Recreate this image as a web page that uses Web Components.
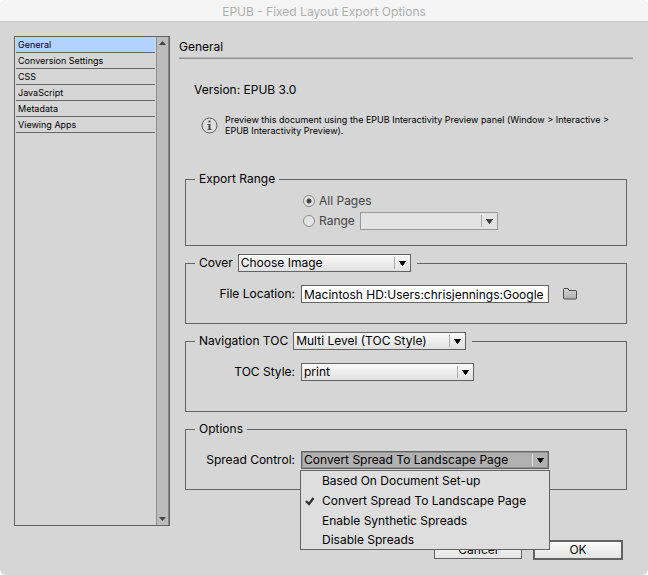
<!DOCTYPE html>
<html lang="en">
<head>
<meta charset="utf-8">
<meta name="viewport" content="width=device-width, initial-scale=1">
<title>EPUB - Fixed Layout Export Options</title>
<style>
  html { background: #fff; }
  body {
    margin: 0;
    font: 12px/18px Inter, "Liberation Sans", sans-serif;
    color: #000;
    --line: #636363;
    --panel: #d6d6d6;
  }
</style>
</head>
<body>
<dialog-window heading="EPUB - Fixed Layout Export Options">
  <section-list slot="sidebar" items="General|Conversion Settings|CSS|JavaScript|Metadata|Viewing Apps" current="General"></section-list>
  <settings-page heading="General">
    <version-info version="Version: EPUB 3.0">Preview this document using the EPUB Interactivity Preview panel (Window &gt; Interactive &gt; EPUB Interactivity Preview).</version-info>
    <group-box>
      <span slot="legend">Export Range</span>
      <range-choice></range-choice>
    </group-box>
    <group-box>
      <drop-down slot="legend" label="Cover" options="Choose Image"></drop-down>
      <file-field label="File Location:" value="Macintosh HD:Users:chrisjennings:Google Drive"></file-field>
    </group-box>
    <group-box class="tall">
      <drop-down slot="legend" label="Navigation TOC" options="Multi Level (TOC Style)"></drop-down>
      <drop-down class="row" label="TOC Style:" options="print"></drop-down>
    </group-box>
    <group-box>
      <span slot="legend">Options</span>
      <drop-down class="row wide" open label="Spread Control:" value="Convert Spread To Landscape Page"
        options="Based On Document Set-up|Convert Spread To Landscape Page|Enable Synthetic Spreads|Disable Spreads"></drop-down>
    </group-box>
  </settings-page>
  <push-button slot="actions">Cancel</push-button>
  <push-button slot="actions" primary>OK</push-button>
</dialog-window>

<script>
const define = (name, render, setup) => customElements.define(name, class extends HTMLElement {
  connectedCallback() {
    if (this.shadowRoot) return;
    const root = this.attachShadow({ mode: 'open' });
    root.innerHTML = '<style>*{box-sizing:border-box}</style>' + render(this);
    if (setup) setup(this, root);
  }
});

define('dialog-window', el => `
  <style>
    :host { display: flex; flex-direction: column; min-height: 100vh; background: var(--panel); border-radius: 6px; overflow: hidden; }
    header { background: #f5f5f5; border-bottom: 1px solid #cbcbcb; }
    h1 { margin: 0; padding: 3px 0 0; font-size: 12px; line-height: 18px; font-weight: 400; text-align: center; color: #b0b0b0; }
    .body { flex: 1; display: grid; grid-template: 1fr auto / 156px 1fr; gap: 14px 9px; padding: 14px 15px 15px 14px; }
    footer { grid-column: 1 / -1; display: flex; justify-content: flex-end; gap: 11px; padding-right: 10px; }
  </style>
  <header><h1>${el.getAttribute('heading')}</h1></header>
  <div class="body">
    <slot name="sidebar"></slot>
    <slot></slot>
    <footer><slot name="actions"></slot></footer>
  </div>`);

define('section-list', el => `
  <style>
    :host { display: flex; border: 1px solid var(--line); }
    nav { flex: 1; padding: 0 1px; min-width: 0; }
    button { display: block; width: 100%; height: 16px; padding: 0 2px; border: 0; border-bottom: 1px solid #686868; background: none; color: inherit; font: inherit; font-size: 9px; line-height: 15px; text-align: left; }
    button[aria-current] { background: #b3d2fd; }
    .bar { width: 13px; display: flex; flex-direction: column; justify-content: space-between; align-items: center; padding: 4px 0; background: #bcbcbc; border-left: 1px solid #8e8e8e; border-right: 1px solid #858585; }
    svg { display: block; fill: #444; }
  </style>
  <nav aria-label="Sections">${el.getAttribute('items').split('|').map(t =>
    `<button type="button"${t === el.getAttribute('current') ? ' aria-current="page"' : ''}>${t}</button>`).join('')}</nav>
  <div class="bar" aria-hidden="true">
    <svg width="7" height="4"><path d="M0 4 3.5 0 7 4Z"/></svg>
    <svg width="7" height="4"><path d="M0 0 3.5 4 7 0Z"/></svg>
  </div>`);

define('settings-page', el => `
  <style>
    :host { display: block; min-width: 0; }
    h2 { margin: 0; padding-top: 1px; font-size: 12px; line-height: 20px; font-weight: 400; }
    hr { margin: 0; height: 2px; border: 0; border-top: 1px solid #b4b4b4; border-bottom: 1px solid #929292; }
    .groups { display: flex; flex-direction: column; gap: 8px; padding: 0 6px; }
  </style>
  <h2>${el.getAttribute('heading')}</h2><hr>
  <div class="groups"><slot></slot></div>`);

define('version-info', el => `
  <style>
    :host { display: block; padding: 21px 9px 26px; }
    h3 { margin: 0; font-size: 12px; line-height: 20px; font-weight: 400; }
    .note { display: flex; align-items: center; gap: 7px; padding: 14px 0 0 7px; }
    p { margin: 0; font-size: 9px; line-height: 11px; }
    svg { flex: none; display: block; }
  </style>
  <h3>${el.getAttribute('version')}</h3>
  <div class="note">
    <svg width="17" height="17" viewBox="0 0 17 17" aria-hidden="true">
      <circle cx="8.500" cy="8.500" r="7.500" fill="#dedede" stroke="#5a5a5a"/>
      <path d="M7.500 3.500h2v2h-2zM6.500 7h3v5h1v1h-4v-1h1V8h-1z" fill="#4a4a4a"/>
    </svg>
    <p><slot></slot></p>
  </div>`);

define('group-box', () => `
  <style>
    :host { display: block; }
    fieldset { margin: 0; min-width: 0; border: 1px solid var(--line); padding: 13px 0 20px; }
    :host(.tall) fieldset { padding-bottom: 30px; }
    legend { margin-left: 9px; padding: 0 4px; height: 18px; line-height: 18px; }
  </style>
  <fieldset><legend><slot name="legend"></slot></legend><slot></slot></fieldset>`);

define('range-choice', () => `
  <style>
    :host { display: block; margin: -10px 0 -6px; padding-left: 117px; color: #444; }
    div { display: flex; align-items: center; height: 20px; }
    input { appearance: none; width: 12px; height: 12px; margin: 0 4px 0 0; border: 1px solid #8a8a8a; border-radius: 50%; background: #e4e4e4; }
    input:checked { background: radial-gradient(circle, #444 0 2px, #e4e4e4 3px); }
  </style>
  <div><input type="radio" name="range" id="all" checked disabled><label for="all">All Pages</label></div>
  <div><input type="radio" name="range" id="some" disabled><label for="some">Range</label><drop-down class="empty" disabled label="" name="Page range" options=""></drop-down></div>`);

define('drop-down', el => {
  const options = el.getAttribute('options').split('|');
  const value = el.getAttribute('value') || options[0];
  const label = el.getAttribute('label');
  return `
  <style>
    :host { display: flex; align-items: center; gap: 6px; position: relative; height: 18px; }
    :host([slot=legend]) { gap: 5px; padding-right: 2px; }
    :host(.row) label { width: 109px; text-align: right; }
    :host(.empty) { padding-left: 5px; }
    .box { display: grid; width: 173px; }
    :host(.wide) .box { width: 248px; }
    :host(.empty) .box { width: 138px; }
    .box > * { grid-area: 1 / 1; }
    select { appearance: none; width: 100%; height: 18px; margin: 0; padding: 0 22px 0 2px; border: 1px solid var(--line); border-radius: 0; background: linear-gradient(#fafafa, #e0e0e0); color: #000; font: inherit; line-height: 16px; opacity: 1; }
    select:disabled { border-color: #999; background: #e3e3e3; }
    .arrow { justify-self: end; align-self: center; pointer-events: none; fill: #000; stroke: none; }
    .arrow path + path { fill: #aaa; }
    :host([disabled]) .arrow { fill: #444; }
    :host([open]) select { background: #b1b1b1; box-shadow: inset 0 0 0 1px #929292; }
    :host([open]) .arrow path + path { fill: #e2e2e2; }
    ul { position: absolute; z-index: 5; top: 19px; left: 114px; width: 250px; margin: 0; padding: 0; border: 1px solid var(--line); background: #dedede; list-style: none; }
    li { display: flex; align-items: center; height: 20px; padding-left: 4px; }
    li:last-child { height: 18px; }
    li svg { width: 10px; height: 10px; margin-right: 7px; fill: none; stroke: #333; stroke-width: 2; visibility: hidden; }
    li[aria-selected=true] svg { visibility: visible; }
  </style>
  ${label ? `<label for="s">${label}</label>` : ''}
  <div class="box">
    <select id="s"${label ? '' : ` aria-label="${el.getAttribute('name')}"`}${el.hasAttribute('disabled') ? ' disabled' : ''}>
      ${options.map(o => `<option${o === value ? ' selected' : ''}>${o}</option>`).join('')}
    </select>
    <svg class="arrow" width="17" height="16" aria-hidden="true"><path d="M5 6h7v1h-1v1.500h-1V10H9v1H8v-1H7V8.500H6V7H5z"/><path d="M0 2h1v12H0z"/></svg>
  </div>
  ${el.hasAttribute('open') ? `<ul role="listbox" aria-label="${label}">${options.map(o =>
    `<li role="option" aria-selected="${o === value}"><svg viewBox="0 0 10 10" aria-hidden="true"><path d="M1 5 4 8 8.500 2" stroke-width="2.400"/></svg>${o}</li>`).join('')}</ul>` : ''}`;
}, (el, root) => {
  const list = root.querySelector('ul');
  if (!list) return;
  list.addEventListener('click', e => {
    const item = e.target.closest('li');
    if (!item) return;
    root.querySelector('select').value = item.textContent;
    list.remove();
    el.removeAttribute('open');
  });
});

define('file-field', el => `
  <style>
    :host { display: flex; align-items: center; gap: 6px; }
    label { width: 109px; text-align: right; }
    input { width: 248px; height: 18px; margin: 0; padding: 1px 0 0 2px; border: 1px solid var(--line); border-radius: 0; background: #fff; color: #000; font: inherit; }
    button { margin-left: 8px; padding: 0; border: 0; background: none; line-height: 0; }
  </style>
  <label for="f">${el.getAttribute('label')}</label>
  <input id="f" type="text" value="${el.getAttribute('value')}">
  <button type="button" aria-label="Choose file">
    <svg width="14" height="12" viewBox="0 0 14 12">
      <defs><linearGradient id="g" x2="0" y2="1"><stop stop-color="#d2d2d2"/><stop offset="1" stop-color="#b0b0b0"/></linearGradient></defs>
      <path d="M.5 10.500v-9L1 .5h4l1 2h7l.5.5v7.500l-.5.500H1z" fill="url(#g)" stroke="#4c4c4c"/>
    </svg>
  </button>`);

define('push-button', el => `
  <style>
    :host { display: flex; align-items: center; min-height: 20px; }
    button { width: 88px; height: 18px; padding: 0; border: 1px solid var(--line); border-radius: 0; background: linear-gradient(#fafafa, #e4e4e4); color: #000; font: inherit; line-height: 16px; }
    :host([primary]) button { width: 90px; height: 20px; border-width: 2px; }
  </style>
  <button type="button"><slot></slot></button>`);
</script>
</body>
</html>
